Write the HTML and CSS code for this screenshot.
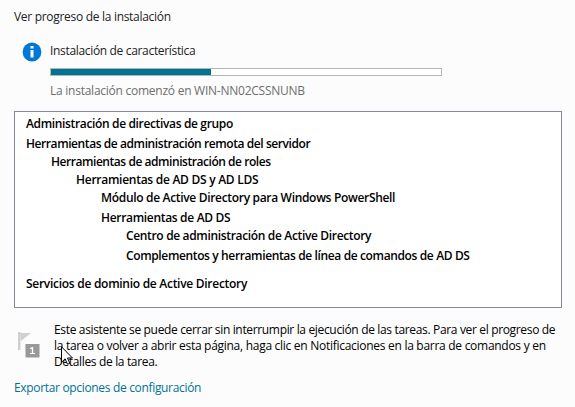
FILE: index.html
```html
<!DOCTYPE html>
<html lang="es">
<head>
<meta charset="utf-8">
<title>Progreso de la instalación</title>
<link rel="stylesheet" href="styles.css">
</head>
<body>
<main class="wizard">
  <h1 class="title"><span>Ver progreso de la instalación</span></h1>
  <section class="status">
    <svg class="info" width="20" height="20" viewBox="0 0 20 20" aria-hidden="true">
      <circle cx="10" cy="10" r="9.400" fill="#0078d7"/>
      <path d="M8.500 4h3v2.500h-3zM8.500 8h3v7.500h-3z" fill="#fff"/>
    </svg>
    <div class="status-body">
      <p class="task"><span>Instalación de característica</span></p>
      <div class="bar"><div class="fill"></div></div>
      <p class="started"><span>La instalación comenzó en WIN-NN02CSSNUNB</span></p>
    </div>
  </section>
  <ul class="features">
    <li class="gap f1"><span>Administración de directivas de grupo</span></li>
    <li class="f2"><span>Herramientas de administración remota del servidor</span></li>
    <li class="l1 f3"><span>Herramientas de administración de roles</span></li>
    <li class="l2 f4"><span>Herramientas de AD DS y AD LDS</span></li>
    <li class="l3 gap f5"><span>Módulo de Active Directory para Windows PowerShell</span></li>
    <li class="l3 f6"><span>Herramientas de AD DS</span></li>
    <li class="l4 gap f7"><span>Centro de administración de Active Directory</span></li>
    <li class="l4 group-end f8"><span>Complementos y herramientas de línea de comandos de AD DS</span></li>
    <li class="f9"><span>Servicios de dominio de Active Directory</span></li>
  </ul>
  <section class="note">
    <svg class="flag" width="22" height="27" viewBox="0 0 22 27" aria-hidden="true">
      <path d="M0 0h2.500v18H0zM2.500 1h10.500L3 9z" fill="#d0d0d0"/>
      <path d="M7.500 12h14v13.500h-14z" fill="#999"/>
      <path d="M11.800 16.200l2.200-1.200h1.200v6h1.800v1h-5v-1h1.800v-4.500l-2 .8z" fill="#fff"/>
    </svg>
    <p class="note-text"><span class="n1">Este asistente se puede cerrar sin interrumpir la ejecución de las tareas. Para ver el progreso de</span><br><span class="n2">la tarea o volver a abrir esta página, haga clic en Notificaciones en la barra de comandos y en</span><br><span class="n3">Detalles de la tarea.</span></p>
  </section>
  <a class="export"><span>Exportar opciones de configuración</span></a>
  <svg class="cursor" width="13" height="20" viewBox="0 0 13 20" aria-hidden="true">
    <path d="M.5.8v15.500l3.600-3.500 2.400 5.500 2.300-1-2.300-5.300h5z" fill="#fff" stroke="#000"/>
  </svg>
</main>
</body>
</html>
```
FILE: styles.css
```css
* { box-sizing: border-box; }
body {
  margin: 0;
  background: #fcfcfc;
  color: #000;
  font: 12px/16px "Open Sans", "Noto Sans", sans-serif;
  letter-spacing: -0.3px;
  white-space: nowrap;
}
p, h1, ul { margin: 0; padding: 0; font-size: 12px; font-weight: 400; }
.wizard { position: relative; width: 575px; height: 407px; overflow: hidden; padding: 9px 12px 0 14px; }
.title { color: #222; }
.status { display: flex; margin-top: 18px; }
.info { margin: -1px 8px 0 8px; flex: none; }
.status-body { width: 392px; }
.task { color: #222; letter-spacing: -0.33px; }
.bar { height: 8px; margin: 9px 0 7px; border: 1px solid #b5b5b5; background: #fff; }
.fill { width: 160px; height: 6px; background: #007393; }
.started { color: #6e6e6e; letter-spacing: -0.25px; }
.features {
  list-style: none;
  width: 548px;
  height: 197px;
  margin-top: 12px;
  padding: 4px 0 0 11px;
  border: 1px solid #858a94;
  background: #fff;
  font-weight: 600;
}
.features li { height: 18px; }
.features .gap { height: 20px; }
.features .f2 { letter-spacing: -0.42px; }
.features .group-end { height: 28px; }
.f1 { letter-spacing: -0.35px; }
.f3 { letter-spacing: -0.45px; }
.f4 { letter-spacing: -0.27px; }
.f5, .f6 { letter-spacing: -0.32px; }
.f7 { letter-spacing: -0.34px; }
.f8 { letter-spacing: -0.37px; }
.f9 { letter-spacing: -0.28px; }
.l1 { padding-left: 25px; }
.l2 { padding-left: 50px; }
.l3 { padding-left: 75px; }
.l4 { padding-left: 100px; }
.note { display: flex; margin-top: 14px; }
.flag { flex: none; margin: 10px 0 0 4px; }
.note-text { margin-left: 14px; }
.n1 { letter-spacing: -0.34px; }
.n2 { letter-spacing: -0.28px; }
.n3 { letter-spacing: -0.34px; }
.export { display: block; margin-top: 10px; color: #007393; letter-spacing: -0.33px; }
.cursor { position: absolute; left: 61px; top: 346px; }
```
